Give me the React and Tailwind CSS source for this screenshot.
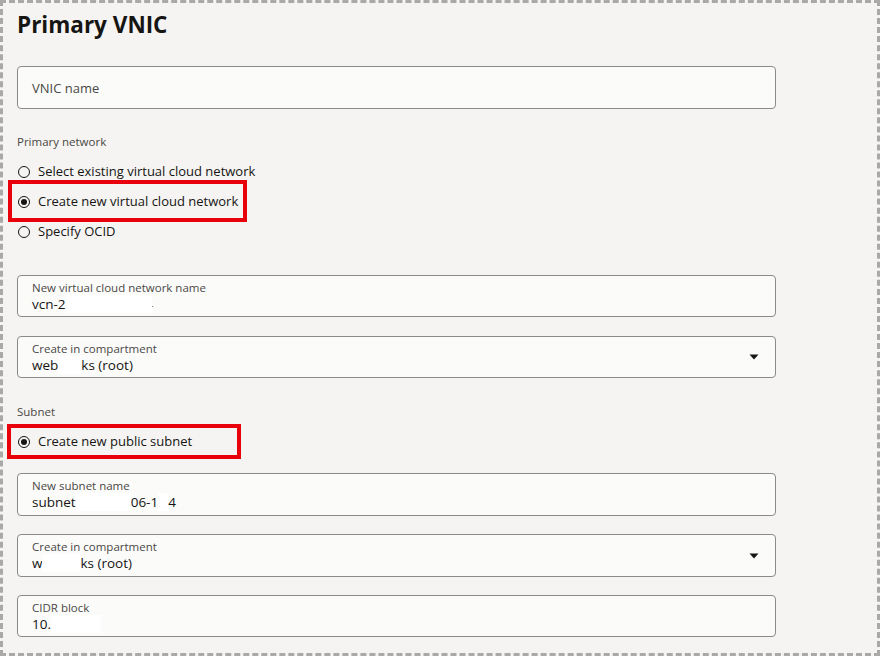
import React from 'react';

const font = { fontFamily: '"Open Sans", "Noto Sans", sans-serif' };

const Blank = ({ w }) => (
    <span className="inline-block h-[18px] bg-white align-middle" style={{ width: w }} />
);

const Caret = () => (
    <svg width="10" height="6" viewBox="0 0 10 6" className="absolute right-[16px] top-1/2 -translate-y-1/2">
        <path d="M0.5 0.5 H9.5 L5 5.5 Z" fill="#161513" />
    </svg>
);

const Field = ({ label, children, select, className = '' }) => (
    <div className={`relative w-[759px] rounded-[4px] border border-[#8c8a86] bg-[#fbfbfa] pl-[14px] pt-[5px] ${className}`}>
        <div className="h-[14px] text-[11.5px] leading-[14px] text-[#4a4845]">{label}</div>
        <div className="flex h-[18px] items-center text-[13.5px] leading-[18px] text-[#161513]">{children}</div>
        {select && <Caret />}
    </div>
);

const Radio = ({ checked, label, mark }) => (
    <div className="relative flex h-[30px] items-center">
        <span className="ml-[1px] flex h-[12px] w-[12px] shrink-0 items-center justify-center rounded-full border border-[#161513]">
            {checked && <span className="h-[6px] w-[6px] rounded-full bg-[#161513]" />}
        </span>
        <span className="ml-[8px] text-[13px] text-[#161513]">{label}</span>
        {mark}
    </div>
);

export default function App() {
    return (
        <div className="h-[657px] w-[881px] bg-white" style={font}>
            <div className="h-[656px] w-[880px] overflow-hidden border-[3px] border-dashed border-[#a9a9a9] bg-[#f5f4f2] pl-[14px]">
                <h1 className="mt-[8px] h-[28px] text-[22.5px] font-bold leading-[28px] text-[#161513]">Primary VNIC</h1>

                <div className="mt-[27px] flex h-[43px] w-[759px] items-center rounded-[4px] border border-[#8c8a86] bg-[#fbfbfa] pl-[14px] pt-[3px] text-[13px] text-[#4a4845]">
                    VNIC name
                </div>

                <div className="mt-[25px] h-[16px] text-[11.5px] leading-[16px] text-[#4a4845]">Primary network</div>

                <div className="mt-[7px]">
                    <Radio label="Select existing virtual cloud network" />
                    <Radio
                        checked
                        label="Create new virtual cloud network"
                        mark={<span className="absolute left-[-9px] top-[-7px] h-[42px] w-[239px] border-4 border-[#e8000b]" />}
                    />
                    <Radio label="Specify OCID" />
                </div>

                <Field label="New virtual cloud network name" className="mt-[28px] h-[42px]">
                    vcn-2<Blank w={86} /><span className="text-[8px]">.</span>
                </Field>

                <Field label="Create in compartment" select className="mt-[19px] h-[42px]">
                    web<Blank w={23} />ks (root)
                </Field>

                <div className="mt-[26px] h-[16px] text-[11.5px] leading-[16px] text-[#4a4845]">Subnet</div>

                <div className="mt-[7px]">
                    <Radio
                        checked
                        label="Create new public subnet"
                        mark={<span className="absolute left-[-10px] top-[-3px] h-[35px] w-[234px] border-4 border-[#e8000b]" />}
                    />
                </div>

                <Field label="New subnet name" className="mt-[16px] h-[43px]">
                    subnet<Blank w={55} />06-1<Blank w={10} />4
                </Field>

                <Field label="Create in compartment" select className="mt-[18px] h-[43px]">
                    w<Blank w={38} />ks (root)
                </Field>

                <Field label="CIDR block" className="mt-[18px] h-[42px]">
                    10.<Blank w={50} />
                </Field>
            </div>
        </div>
    );
}
